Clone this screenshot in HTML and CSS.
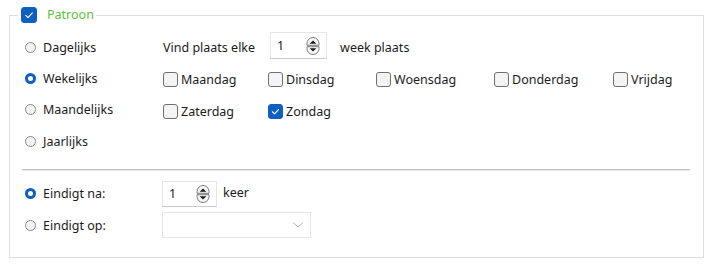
FILE: index.html
```html
<!DOCTYPE html>
<html lang="nl">
<head>
<meta charset="utf-8">
<title>Patroon</title>
<link rel="stylesheet" href="styles.css">
</head>
<body>
<fieldset class="group">
  <legend class="title">
    <span class="cb cb-checked cb-big"><svg viewBox="0 0 16 16" width="16" height="16"><path d="M4.3 8.4 L6.9 10.9 L11.8 5.6" fill="none" stroke="#fff" stroke-width="1.3" stroke-linecap="round" stroke-linejoin="round"/></svg></span>
    <span class="title-text">Patroon</span>
  </legend>
  <div class="content">
    <div class="top">
      <div class="modes">
        <div class="opt"><span class="radio"></span><span>Dagelijks</span></div>
        <div class="opt"><span class="radio radio-on"></span><span>Wekelijks</span></div>
        <div class="opt"><span class="radio"></span><span>Maandelijks</span></div>
        <div class="opt"><span class="radio"></span><span>Jaarlijks</span></div>
      </div>
      <div class="week">
        <div class="every">
          <span>Vind plaats elke</span>
          <div class="spin spin-week">
            <span class="spin-val">1</span>
            <svg class="spin-btn" viewBox="0 0 16 20" width="16" height="20"><path d="M2 9.3 V7.5 a6 6 0 0 1 12 0 V9.3 Z" fill="#f6f6f6" stroke="#7a7a7a" stroke-width="1"/><path d="M2 10.7 V12.5 a6 6 0 0 0 12 0 V10.7 Z" fill="#f6f6f6" stroke="#7a7a7a" stroke-width="1"/><path d="M4.6 7.8 L8 4.4 L11.4 7.8 Z" fill="#1a1a1a"/><path d="M4.6 12.2 L8 15.6 L11.4 12.2 Z" fill="#1a1a1a"/></svg>
          </div>
          <span>week plaats</span>
        </div>
        <div class="days">
          <label class="day"><span class="cb"></span>Maandag</label>
          <label class="day"><span class="cb"></span>Dinsdag</label>
          <label class="day"><span class="cb"></span>Woensdag</label>
          <label class="day"><span class="cb"></span>Donderdag</label>
          <label class="day"><span class="cb"></span>Vrijdag</label>
          <label class="day"><span class="cb"></span>Zaterdag</label>
          <label class="day"><span class="cb cb-checked"><svg viewBox="0 0 15 15" width="15" height="15"><path d="M3.9 7.8 L6.4 10.2 L11 5.2" fill="none" stroke="#fff" stroke-width="1.3" stroke-linecap="round" stroke-linejoin="round"/></svg></span>Zondag</label>
        </div>
      </div>
    </div>
    <div class="sep"></div>
    <div class="end">
      <div class="opt"><span class="radio radio-on"></span><span>Eindigt na:</span></div>
      <div class="end-ctrl">
        <div class="spin spin-end">
          <span class="spin-val">1</span>
          <svg class="spin-btn" viewBox="0 0 16 20" width="16" height="20"><path d="M2 9.3 V7.5 a6 6 0 0 1 12 0 V9.3 Z" fill="#f6f6f6" stroke="#7a7a7a" stroke-width="1"/><path d="M2 10.7 V12.5 a6 6 0 0 0 12 0 V10.7 Z" fill="#f6f6f6" stroke="#7a7a7a" stroke-width="1"/><path d="M4.6 7.8 L8 4.4 L11.4 7.8 Z" fill="#1a1a1a"/><path d="M4.6 12.2 L8 15.6 L11.4 12.2 Z" fill="#1a1a1a"/></svg>
        </div>
        <span class="keer">keer</span>
      </div>
      <div class="opt"><span class="radio"></span><span>Eindigt op:</span></div>
      <div class="end-ctrl">
        <div class="combo">
          <svg class="chev" viewBox="0 0 12 8" width="12" height="8"><path d="M1 1.5 L6 6 L11 1.5" fill="none" stroke="#b5b5b5" stroke-width="1"/></svg>
        </div>
      </div>
    </div>
  </div>
</fieldset>
</body>
</html>
```
FILE: styles.css
```css
html, body {
  margin: 0;
  padding: 0;
  background: #ffffff;
}
body {
  font-family: "Noto Sans", "Open Sans", sans-serif;
  font-size: 12.5px;
  color: #1b1b1b;
  width: 715px;
  height: 265px;
  overflow: hidden;
}
.group {
  box-sizing: border-box;
  width: 695px;
  margin: 6px 0 0 9px;
  padding: 0;
  border: 1px solid #dcdcdc;
  min-width: 0;
}
.title {
  display: flex;
  align-items: center;
  height: 18px;
  padding: 0 2px 0 3px;
  margin-left: 8px;
}
.title-text {
  color: #5cbf3a;
  margin-left: 10px;
  line-height: 18px;
}
.cb {
  box-sizing: border-box;
  width: 15px;
  height: 15px;
  border: 1px solid #6f6f6f;
  border-radius: 3px;
  background: #f4f4f4;
  display: inline-flex;
  align-items: center;
  justify-content: center;
  flex: none;
  margin-right: 3px;
}
.cb svg { display: block; }
.cb-checked {
  background: #0d5fc0;
  border-color: #0d5fc0;
}
.cb-big {
  width: 16px;
  height: 16px;
  margin-right: 0;
}
.content {
  padding: 7.5px 13px 16px 12px;
}
.top {
  display: flex;
}
.modes {
  width: 141px;
  flex: none;
  display: flex;
  flex-direction: column;
}
.opt {
  height: 31.3px;
  display: flex;
  align-items: center;
  padding-left: 3px;
}
.radio {
  box-sizing: border-box;
  width: 11px;
  height: 11px;
  border-radius: 50%;
  border: 1px solid #8c8c8c;
  background: #f3f3f3;
  margin-right: 7px;
  flex: none;
}
.radio-on {
  border: 3px solid #0d5fc0;
  background: #ffffff;
}
.week {
  flex: 1;
  display: flex;
  flex-direction: column;
}
.every {
  display: flex;
  align-items: center;
  height: 31.3px;
}
.spin {
  box-sizing: border-box;
  display: flex;
  align-items: center;
  justify-content: space-between;
  border: 1px solid #e6e6e6;
  border-bottom-color: #c9c9c9;
  background: #fff;
  padding: 0 5px 0 6px;
  height: 27px;
}
.spin-week {
  width: 57px;
  margin: -3px 13px 0 15px;
}
.spin-end {
  width: 55px;
  height: 26px;
}
.spin-btn { display: block; }
.days {
  display: grid;
  grid-template-columns: 105px 108px 118px 119px auto;
  grid-auto-rows: 32.5px;
  align-items: center;
}
.day {
  display: flex;
  align-items: center;
}
.sep {
  height: 0;
  border-top: 1px solid #c2c2c2;
  border-bottom: 1px solid #e8e8e8;
  margin: 12.5px 0 7px 0;
}
.end {
  display: grid;
  grid-template-columns: 140px auto;
  grid-auto-rows: 31.3px;
  align-items: center;
}
.end-ctrl {
  display: flex;
  align-items: center;
}
.keer {
  margin-left: 6px;
  margin-top: -3px;
}
.combo {
  box-sizing: border-box;
  width: 149px;
  height: 26px;
  border: 1px solid #e6e6e6;
  background: #fff;
  display: flex;
  align-items: center;
  justify-content: flex-end;
  padding-right: 6px;
}
.chev { display: block; }
```
